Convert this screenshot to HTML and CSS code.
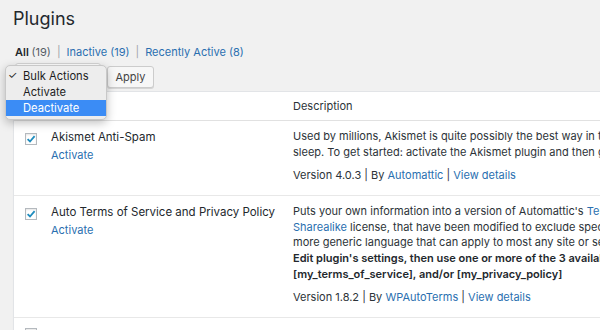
FILE: index.html
```html
<!DOCTYPE html>
<html lang="en-US">
  <head>
    <meta charset="utf-8">
    <title>Plugins</title>
    <link rel="stylesheet" href="styles.css">
  </head>
<body>
  <div class="wrap">
    <h1 class="page-title">Plugins</h1>

    <ul class="subsubsub">
      <li class="current">All <span class="count">(19)</span></li>
      <li class="sep">|</li>
      <li><a href="#">Inactive <span class="count">(19)</span></a></li>
      <li class="sep">|</li>
      <li><a href="#">Recently Active <span class="count">(8)</span></a></li>
    </ul>

    <div class="tablenav">
      <div class="bulk-select"></div>
      <button class="button">Apply</button>

      <ul class="bulk-menu">
        <li><span class="tick">✓</span>Bulk Actions</li>
        <li>Activate</li>
        <li class="selected">Deactivate</li>
      </ul>
    </div>

    <div class="plugins">
      <div class="row head">
        <div></div>
        <div></div>
        <div class="desc">Description</div>
      </div>

      <div class="row">
        <div class="cb"><span class="check"><svg viewBox="0 0 12 12" width="12" height="12"><path d="M2.6 6.2 L5 8.5 L9.6 3.2" fill="none" stroke="#1e8cbe" stroke-width="1.8"/></svg></span></div>
        <div class="name">
          <div class="title">Akismet Anti-Spam</div>
          <div class="actions"><a href="#">Activate</a></div>
        </div>
        <div class="desc">
          <p>Used by millions, Akismet is quite possibly the best way in the world to protect your blog from spam. It keeps your site protected even while you<br>sleep. To get started: activate the Akismet plugin and then go to your Akismet Settings page to set up your API key.</p>
          <p class="meta">Version 4.0.3 | By <a href="#">Automattic</a> | <a href="#">View details</a></p>
        </div>
      </div>

      <div class="row">
        <div class="cb"><span class="check"><svg viewBox="0 0 12 12" width="12" height="12"><path d="M2.6 6.2 L5 8.5 L9.6 3.2" fill="none" stroke="#1e8cbe" stroke-width="1.8"/></svg></span></div>
        <div class="name">
          <div class="title">Auto Terms of Service and Privacy Policy</div>
          <div class="actions"><a href="#">Activate</a></div>
        </div>
        <div class="desc">
          <p>Puts your own information into a version of Automattic's <a href="#">Terms of Service</a> and <a href="#">Privacy Policy</a>, both available under the <a href="#">Creative Commons</a><br><a href="#">Sharealike</a> license, that have been modified to exclude specific references to Automattic and WordPress.com and instead use<br>more generic language that can apply to most any site or service.<br><strong>Edit plugin's settings, then use one or more of the 3 available shortcodes: [my_terms_of_service_and_privacy_policy],<br>[my_terms_of_service], and/or [my_privacy_policy]</strong></p>
          <p class="meta">Version 1.8.2 | By <a href="#">WPAutoTerms</a> | <a href="#">View details</a></p>
        </div>
      </div>

      <div class="row last">
        <div class="cb"><span class="check"></span></div>
        <div class="name"></div>
        <div class="desc"></div>
      </div>
    </div>
  </div>
</body>
</html>
```

FILE: styles.css
```css
body {
  margin: 0;
  background: #f1f1f1;
  font-family: "Inter", "Liberation Sans", sans-serif;
  font-size: 11px;
  color: #2c3338;
  overflow: hidden;
}

a {
  color: #2a6fb0;
  text-decoration: none;
}

.wrap {
  padding-left: 13px;
  width: 900px;
}

.page-title {
  margin: 0;
  padding-top: 7px;
  font-size: 18px;
  font-weight: 400;
  line-height: 24px;
  color: #23282d;
}

.subsubsub {
  list-style: none;
  margin: 13px 0 0 2px;
  padding: 0;
  display: flex;
  gap: 6px;
  line-height: 16px;
}

.subsubsub .current {
  font-weight: 600;
  color: #23282d;
}

.subsubsub .count {
  font-weight: 400;
  color: #555d66;
}

.subsubsub a .count {
  color: #2a6fb0;
}

.subsubsub .sep {
  color: #a0a5aa;
}

/* bulk actions bar */
.tablenav {
  position: relative;
  display: flex;
  align-items: flex-start;
  gap: 6px;
  margin-top: 3px;
  height: 25px;
  margin-bottom: 3px;
}

.bulk-select {
  margin-left: 2px;
  width: 86px;
  height: 25px;
  box-sizing: border-box;
  border: 1px solid #d4d4d4;
  border-radius: 3px;
  background: #fff;
}

.button {
  margin: 3px 0 0;
  height: 22px;
  width: 47px;
  padding: 0;
  box-sizing: border-box;
  border: 1px solid #cccccc;
  border-radius: 3px;
  background: #f7f7f7;
  box-shadow: 0 1px 0 #d5d5d5;
  font-family: inherit;
  font-size: 11px;
  color: #444;
}

.bulk-menu {
  position: absolute;
  left: -8px;
  top: 2px;
  width: 102px;
  margin: 0;
  padding: 2px 0 3px;
  list-style: none;
  box-sizing: border-box;
  background: #ededed;
  border: 1px solid #c8c8c8;
  border-radius: 5px;
  box-shadow: 0 3px 10px rgba(0, 0, 0, .25);
  font-size: 11.2px;
  line-height: 16px;
  color: #1d1d1d;
  z-index: 2;
}

.bulk-menu li {
  padding-left: 17px;
  position: relative;
}

.bulk-menu .tick {
  position: absolute;
  left: 2px;
  font-size: 10.5px;
}

.bulk-menu .selected {
  background: #3b8cf5;
  color: #fff;
}

/* plugins table */
.plugins {
  background: #fff;
  border: 1px solid #e2e4e7;
  box-shadow: 0 1px 1px rgba(0, 0, 0, .04);
}

.row {
  display: grid;
  grid-template-columns: 37px 242px 1fr;
  padding: 8px 0 11.5px;
  border-bottom: 1px solid #e8e8e8;
  line-height: 15.75px;
}

.row.head {
  padding: 6px 0;
  line-height: 16px;
  border-bottom-color: #e1e1e1;
}

.row.last {
  padding-top: 6px;
  height: 40px;
}

.row p {
  margin: 0;
  white-space: nowrap;
}

.row strong {
  font-weight: 600;
  color: #23282d;
}

.row .meta {
  margin-top: 7px;
}

.name .title {
  font-size: 11.5px;
  color: #23282d;
  line-height: 16px;
}

.name .actions {
  margin-top: 2px;
  line-height: 16px;
}

.cb .check {
  display: block;
  margin: 4px 0 0 11px;
  width: 12px;
  height: 12px;
  box-sizing: border-box;
  border: 1px solid #b4b9be;
  background: #fff;
  box-shadow: inset 0 1px 2px rgba(0, 0, 0, .1);
}

.cb .check svg {
  display: block;
  margin: -1px;
}
```
